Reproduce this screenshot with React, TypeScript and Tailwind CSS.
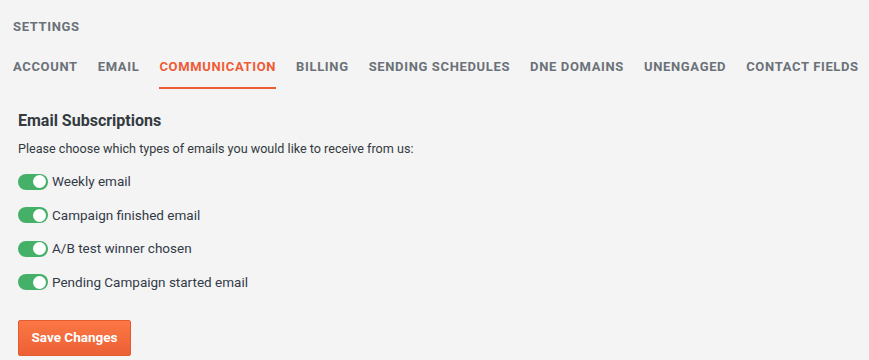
import React from "react";

const tabs = ["ACCOUNT", "EMAIL", "COMMUNICATION", "BILLING", "SENDING SCHEDULES", "DNE DOMAINS", "UNENGAGED", "CONTACT FIELDS"];
const items = ["Weekly email", "Campaign finished email", "A/B test winner chosen", "Pending Campaign started email"];

function Toggle() {
  return (
    <div className="w-[30px] h-[16px] rounded-full bg-[#44b068] flex items-center justify-end px-[2px] shrink-0">
      <div className="w-[13px] h-[13px] rounded-full bg-white" />
    </div>
  );
}

export default function App() {
  return (
    <div className="w-[869px] h-[360px] bg-[#f4f4f4] overflow-hidden" style={{ fontFamily: "Roboto, 'Liberation Sans', sans-serif" }}>
      <div className="pl-[13px] pt-[19px] text-[13px] font-bold tracking-[0.65px] text-[#6b7178] leading-[16px] whitespace-nowrap">SETTINGS</div>
      <div className="flex gap-[20px] pl-[13px] mt-[24px] whitespace-nowrap">
        {tabs.map((t) => (
          <div key={t} className="flex flex-col shrink-0">
            <div className={`text-[13px] font-bold tracking-[0.65px] leading-[16px] ${t === "COMMUNICATION" ? "text-[#ee5b35]" : "text-[#6b7178]"}`}>{t}</div>
            <div className={`mt-[12px] h-[2px] ${t === "COMMUNICATION" ? "bg-[#ee5b35]" : "bg-transparent"}`} />
          </div>
        ))}
      </div>
      <div className="pl-[18px] pt-[22px]">
        <div className="text-[16px] font-bold text-[#333a40] leading-[20px]">Email Subscriptions</div>
        <div className="text-[12.6px] text-[#333a40] mt-[10px] leading-[16px]">Please choose which types of emails you would like to receive from us:</div>
        <div className="flex flex-col gap-[16.5px] mt-[16px]">
          {items.map((i) => (
            <div key={i} className="flex items-center gap-[4px] h-[17px]">
              <Toggle />
              <span className="text-[13.5px] text-[#333a48] leading-[17px]">{i}</span>
            </div>
          ))}
        </div>
        <button className="mt-[29px] w-[113px] h-[36px] rounded-[2px] border border-[#e25c30] bg-gradient-to-b from-[#fb7744] to-[#ec6036] text-white text-[13.5px] font-bold">Save Changes</button>
      </div>
    </div>
  );
}
